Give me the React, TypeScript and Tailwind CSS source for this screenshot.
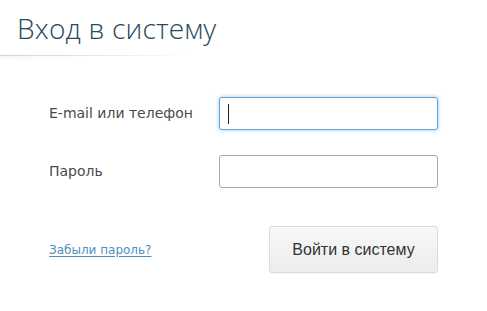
import React from "react";

export default function App() {
  return (
    <div className="w-[487px] h-[311px] bg-white overflow-hidden">
      <div className="pt-[9px] pl-[17px]">
        <h1
          className="text-[28px] leading-[38px] text-[#26495b] font-light tracking-[0.2px]"
          style={{ fontFamily: '"Open Sans", "DejaVu Sans", sans-serif' }}
        >
          Вход в систему
        </h1>
      </div>
      <div className="mt-[8px] h-[8px]">
        <div className="h-[1px] w-[190px] bg-gradient-to-r from-[#d2d2d8] via-[#e6e6e9] to-white" />
        <div className="h-[5px] w-[90px] bg-gradient-to-b from-[#f0f0f2] to-white bg-clip-padding opacity-70 [mask-image:linear-gradient(to_right,black,transparent)]" />
      </div>
      <form
        className="pl-[49px] pt-[34px]"
        style={{ fontFamily: '"DejaVu Sans", Verdana, sans-serif' }}
        onSubmit={(e) => e.preventDefault()}
      >
        <div className="flex items-center h-[33px]">
          <label className="w-[170px] text-[14px] text-[#4a4a4a]">E-mail или телефон</label>
          <div className="relative w-[219px] h-[33px] rounded-[3px] border border-[#66a1d8] shadow-[0_0_4px_rgba(102,161,216,0.6)] bg-white">
            <span className="absolute left-[8px] top-[6px] w-[1px] h-[20px] bg-[#222]" />
          </div>
        </div>
        <div className="flex items-center h-[33px] mt-[25px]">
          <label className="w-[170px] text-[14px] text-[#4a4a4a]">Пароль</label>
          <div className="w-[219px] h-[33px] rounded-[3px] border border-[#a9a9a9] bg-white" />
        </div>
        <div className="flex items-center mt-[38px]">
          <a
            href="#"
            className="w-[220px] text-[12px] text-[#4a8fc0] underline underline-offset-2"
          >
            Забыли пароль?
          </a>
          <button
            type="submit"
            className="w-[169px] h-[47px] rounded-[3px] border border-[#dcdcdc] bg-gradient-to-b from-[#f8f8f8] to-[#ececec] text-[16px] text-[#333] shadow-[0_1px_1px_rgba(0,0,0,0.04)]"
            style={{ fontFamily: '"Liberation Sans", Arial, sans-serif' }}
          >
            Войти в систему
          </button>
        </div>
      </form>
    </div>
  );
}
